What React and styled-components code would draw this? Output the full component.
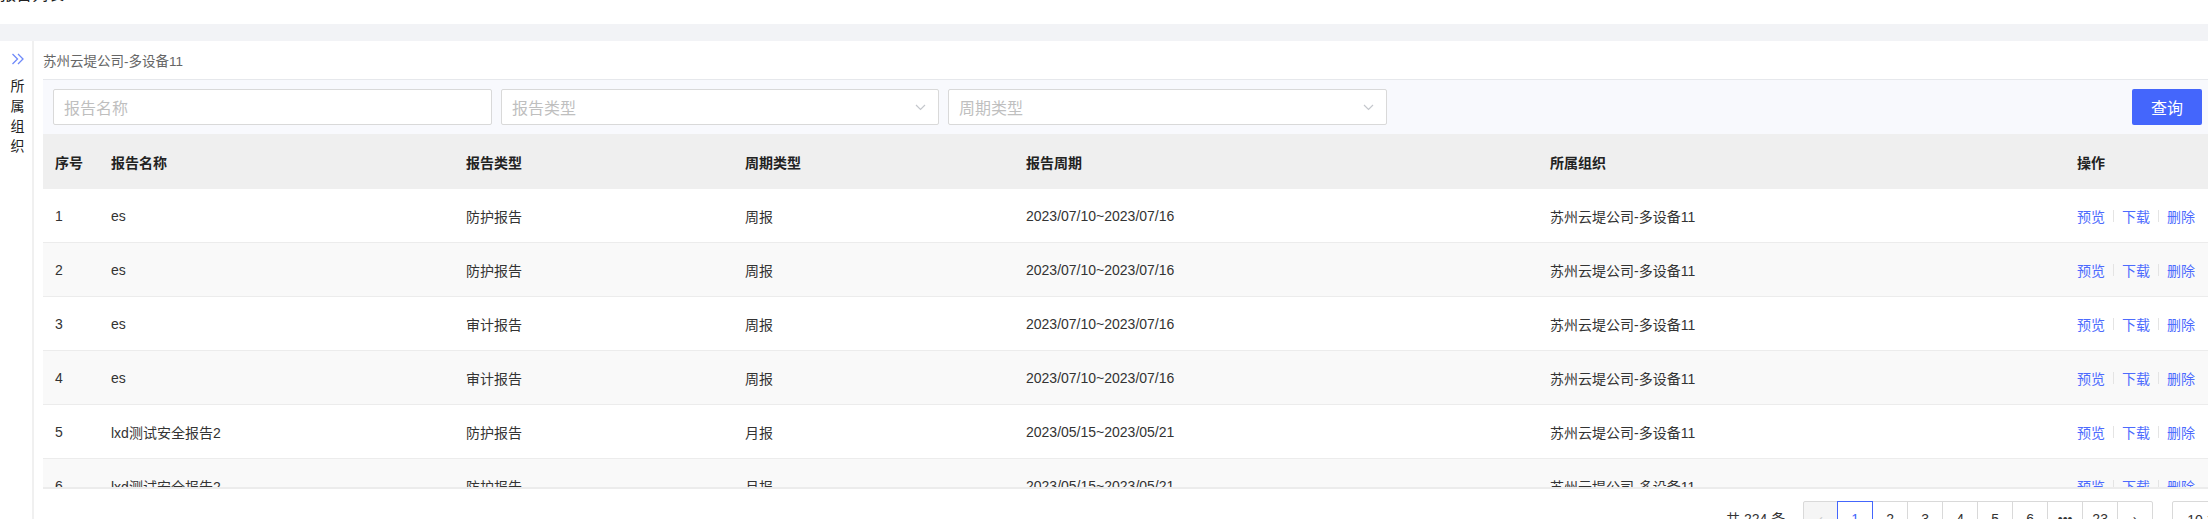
import React from "react";
import styled, { createGlobalStyle } from "styled-components";

const GlobalStyle = createGlobalStyle`
  html, body {
    margin: 0;
    padding: 0;
    background: #ffffff;
    overflow: hidden;
  }
  body {
    font-family: "Liberation Sans", "Noto Sans CJK SC", sans-serif;
    color: #333;
  }
`

const Page = styled.div`
  width: 2212px;
  height: 519px;
  overflow: hidden;
  display: flex;
  flex-direction: column;
`

const TitleBar = styled.div`
  height: 24px;
  overflow: hidden;
  flex-shrink: 0;
`

const PageTitle = styled.div`
  margin-top: -15px;
  font-size: 16px;
  line-height: 20px;
  color: #222;
`

const GreyBand = styled.div`
  height: 17px;
  background: #f2f3f6;
  flex-shrink: 0;
`

const Body = styled.div`
  flex: 1;
  display: flex;
  min-height: 0;
`

const Sidebar = styled.div`
  width: 32px;
  flex-shrink: 0;
  border-right: 2px solid #f0f0f0;
  display: flex;
  flex-direction: column;
  align-items: center;
  padding-top: 11px;
`

const SideToggle = styled.div`
  width: 14px;
  height: 14px;
  display: flex;
  margin-left: 3px;
`

const SideLabel = styled.div`
  margin-top: 10px;
  margin-left: 3px;
  width: 14px;
  font-size: 14px;
  line-height: 20px;
  color: #222;
  word-break: break-all;
`

const Main = styled.div`
  flex: 1;
  padding: 0 0 0 9px;
  display: flex;
  flex-direction: column;
  min-width: 0;
  & > * {
    flex-shrink: 0;
  }
`

const Crumb = styled.div`
  height: 38px;
  display: flex;
  align-items: center;
  font-size: 13.5px;
  color: #666;
`

const FilterBar = styled.div`
  display: flex;
  align-items: center;
  gap: 9px;
  padding: 9px 10px;
  background: #f8f9fd;
  border-top: 1px solid #e6e8ec;
`

const Field = styled.div`
  position: relative;
  width: ${p => p.w}px;
  height: 36px;
  box-sizing: border-box;
  border: 1px solid #d9d9d9;
  border-radius: 2px;
  background: #fff;
  display: flex;
  align-items: center;
  padding: 0 10px;
  font-size: 16px;
  color: #bfbfbf;
`

const Arrow = styled.svg`
  position: absolute;
  right: 12px;
  top: 14px;
`

const Spacer = styled.div`
  flex: 1;
`

const QueryButton = styled.button`
  width: 70px;
  height: 36px;
  border: none;
  border-radius: 2px;
  background: #4466fc;
  color: #fff;
  font-size: 16px;
  font-family: inherit;
  cursor: pointer;
`

const cols = "56px 355px 279px 281px 524px 527px 147px"

const HeadRow = styled.div`
  display: grid;
  grid-template-columns: ${cols};
  height: 55px;
  align-items: center;
  background: #efefef;
  font-size: 14px;
  font-weight: 700;
  color: #222;
`

const Cell = styled.div`
  padding-left: 12px;
  white-space: nowrap;
`

const TableBody = styled.div`
  height: 298px;
  overflow: hidden;
  border-bottom: 2px solid #ececec;
`

const Row = styled.div`
  display: grid;
  grid-template-columns: ${cols};
  height: 54px;
  box-sizing: border-box;
  align-items: center;
  border-bottom: 1px solid #ececec;
  background: ${p => (p.alt ? "#f9f9f9" : "#fff")};
  font-size: 14px;
  color: #333;
`

const Actions = styled.div`
  padding-left: 12px;
  display: flex;
  align-items: center;
  white-space: nowrap;
`

const LinkBtn = styled.span`
  color: #4d6bfe;
  font-size: 14px;
  cursor: pointer;
`

const Sep = styled.span`
  width: 1px;
  height: 12px;
  background: #e4e4e4;
  margin: 0 8px;
`

const Pager = styled.div`
  margin-top: 12px;
  display: flex;
`

const PagerGroup = styled.div`
  margin-left: auto;
  width: 486px;
  display: flex;
  align-items: flex-start;
  white-space: nowrap;
`

const Total = styled.div`
  font-size: 14px;
  color: #333;
  line-height: 36px;
  margin-right: 19px;
`

const PageList = styled.div`
  display: flex;
  flex-shrink: 0;
`

const PageBox = styled.div`
  width: ${p => p.w || 36}px;
  height: 36px;
  box-sizing: border-box;
  border: 1px solid ${p => (p.active ? "#4466fc" : "#d9d9d9")};
  margin-left: -1px;
  position: relative;
  z-index: ${p => (p.active ? 1 : 0)};
  background: ${p => (p.disabled ? "#f5f5f5" : "#fff")};
  color: ${p => (p.active ? "#4466fc" : p.disabled ? "#c8c8c8" : "#333")};
  display: flex;
  align-items: center;
  justify-content: center;
  font-size: 14px;
  flex-shrink: 0;
  &:first-child {
    border-radius: 2px 0 0 2px;
  }
  &:last-child {
    border-radius: 0 2px 2px 0;
  }
`

const SizeSelect = styled.div`
  margin-left: 19px;
  width: 110px;
  height: 36px;
  box-sizing: border-box;
  border: 1px solid #d9d9d9;
  border-radius: 2px;
  font-size: 14px;
  color: #333;
  display: flex;
  align-items: center;
  padding-left: 14px;
  flex-shrink: 0;
`

const rows = [
  ["1", "es", "防护报告", "周报", "2023/07/10~2023/07/16"],
  ["2", "es", "防护报告", "周报", "2023/07/10~2023/07/16"],
  ["3", "es", "审计报告", "周报", "2023/07/10~2023/07/16"],
  ["4", "es", "审计报告", "周报", "2023/07/10~2023/07/16"],
  ["5", "lxd测试安全报告2", "防护报告", "月报", "2023/05/15~2023/05/21"],
  ["6", "lxd测试安全报告2", "防护报告", "月报", "2023/05/15~2023/05/21"],
]

const ORG = "苏州云堤公司-多设备11"

const Chevron = () => (
  <Arrow width="11" height="7" viewBox="0 0 11 7">
    <path d="M1 1 L5.5 5.5 L10 1" fill="none" stroke="#c4c7cc" strokeWidth="1.2" />
  </Arrow>
)

export default function App() {
  return (
    <>
      <GlobalStyle />
      <Page>
        <TitleBar>
          <PageTitle>报告列表</PageTitle>
        </TitleBar>
        <GreyBand />
        <Body>
          <Sidebar>
            <SideToggle>
              <svg width="14" height="14" viewBox="0 0 14 14">
                <path d="M1.5 2 L6.5 7 L1.5 12 M7 2 L12 7 L7 12" fill="none" stroke="#6f8af9" strokeWidth="1.3" />
              </svg>
            </SideToggle>
            <SideLabel>所属组织</SideLabel>
          </Sidebar>
          <Main>
            <Crumb>{ORG}</Crumb>
            <FilterBar>
              <Field w={439}>报告名称</Field>
              <Field w={438}>
                报告类型
                <Chevron />
              </Field>
              <Field w={439}>
                周期类型
                <Chevron />
              </Field>
              <Spacer />
              <QueryButton>查询</QueryButton>
            </FilterBar>
            <HeadRow>
              <Cell>序号</Cell>
              <Cell>报告名称</Cell>
              <Cell>报告类型</Cell>
              <Cell>周期类型</Cell>
              <Cell>报告周期</Cell>
              <Cell>所属组织</Cell>
              <Cell>操作</Cell>
            </HeadRow>
            <TableBody>
              {rows.map((r, i) => (
                <Row key={r[0]} alt={i % 2 === 1}>
                  <Cell>{r[0]}</Cell>
                  <Cell>{r[1]}</Cell>
                  <Cell>{r[2]}</Cell>
                  <Cell>{r[3]}</Cell>
                  <Cell>{r[4]}</Cell>
                  <Cell>{ORG}</Cell>
                  <Actions>
                    <LinkBtn>预览</LinkBtn>
                    <Sep />
                    <LinkBtn>下载</LinkBtn>
                    <Sep />
                    <LinkBtn>删除</LinkBtn>
                  </Actions>
                </Row>
              ))}
            </TableBody>
            <Pager>
              <PagerGroup>
                <Total>共 224 条</Total>
                <PageList>
                  <PageBox w={35} disabled>‹</PageBox>
                  <PageBox active>1</PageBox>
                  <PageBox>2</PageBox>
                  <PageBox>3</PageBox>
                  <PageBox>4</PageBox>
                  <PageBox>5</PageBox>
                  <PageBox>6</PageBox>
                  <PageBox>•••</PageBox>
                  <PageBox>23</PageBox>
                  <PageBox>›</PageBox>
                </PageList>
                <SizeSelect>10 条/页</SizeSelect>
              </PagerGroup>
            </Pager>
          </Main>
        </Body>
      </Page>
    </>
  );
}
